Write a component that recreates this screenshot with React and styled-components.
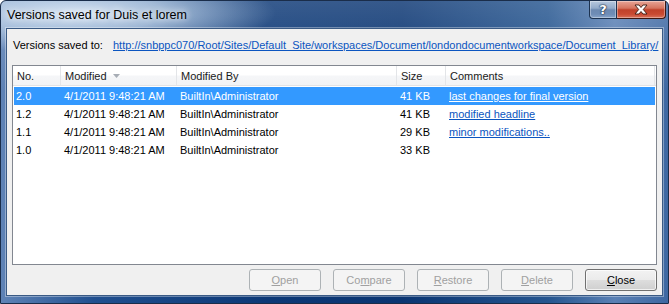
import React from 'react';
import styled, { createGlobalStyle } from 'styled-components';

const GlobalStyle = createGlobalStyle`
  html, body {
    margin: 0;
    padding: 0;
    background: #ffffff;
  }
  body {
    font-family: "Liberation Sans", Arial, sans-serif;
    font-size: 11px;
    color: #000;
  }
`;

const Window = styled.div`
  width: 669px;
  height: 304px;
  box-sizing: border-box;
  display: flex;
  flex-direction: column;
  padding: 0 5px 7px;
  border: 1px solid #1a2d4a;
  border-radius: 6px 6px 0 0;
  background:
    radial-gradient(ellipse 200px 40px at 75px 12px, rgba(218, 231, 245, 0.97) 0%, rgba(190, 210, 232, 0.78) 45%, rgba(190, 210, 232, 0) 100%),
    linear-gradient(180deg, rgba(255, 255, 255, 0.18) 0%, rgba(255, 255, 255, 0) 30%),
    linear-gradient(90deg, #5f83b6 0%, #204f8f 14%, #0c3876 40%, #0a3572 60%, #25558f 82%, #5a80b4 92%, #3e68a2 100%);
`;

const TitleBar = styled.div`
  height: 27px;
  display: flex;
  align-items: center;
  justify-content: space-between;
`;

const Title = styled.span`
  padding-left: 1px;
  font-size: 12.5px;
  color: #000;
  text-shadow: 0 0 6px rgba(255, 255, 255, 0.9), 0 0 10px rgba(255, 255, 255, 0.7);
`;

const Caption = styled.div`
  align-self: flex-start;
  display: flex;
  margin-right: -3px;
`;

const CaptionButton = styled.div`
  width: ${({ $w }) => $w}px;
  height: 18px;
  box-sizing: border-box;
  display: flex;
  align-items: center;
  justify-content: center;
  border: 1px solid ${({ $close }) => ($close ? '#3d1610' : '#1c3250')};
  border-top: none;
  border-left: ${({ $close }) => ($close ? 'none' : '1px solid #1c3250')};
  border-radius: ${({ $close }) => ($close ? '0 0 4px 0' : '0 0 0 4px')};
  box-shadow: inset 0 0 0 1px rgba(255, 255, 255, 0.35);
  background: ${({ $close }) =>
    $close
      ? 'linear-gradient(180deg, #e7a597 0%, #d5745f 42%, #c0412a 52%, #c94a32 78%, #d8735c 100%)'
      : 'linear-gradient(180deg, #b7c8de 0%, #93abca 42%, #6c89b1 52%, #6f8db6 78%, #89a4c8 100%)'};
  color: #fff;
  font-family: "DejaVu Sans", sans-serif;
  font-weight: bold;
  font-size: 13px;
  text-shadow: 0 0 1px #1a2c45, 0 0 1px #1a2c45, 0 0 2px #1a2c45;
`;

const Client = styled.div`
  flex: 1;
  display: flex;
  flex-direction: column;
  padding: 0 5px 4px;
  background: #f0f0f0;
  border: 1px solid #3a5a84;
  box-shadow: 0 0 0 1px rgba(255, 255, 255, 0.35);
`;

const PathRow = styled.div`
  margin-top: 7px;
  height: 18px;
  display: flex;
  align-items: center;
  white-space: nowrap;
`;

const PathLabel = styled.span`
  width: 100px;
  flex: none;
  padding-left: 1px;
`;

const Link = styled.a`
  color: ${({ $light }) => ($light ? '#ffffff' : '#0b55c0')};
  text-decoration: underline;
  cursor: pointer;
`;

const ListBox = styled.div`
  flex: 1;
  margin-top: 11px;
  background: #fff;
  border: 1px solid #828790;
`;

const cols = '48px 116px 220px 49px 209px';

const HeaderRow = styled.div`
  display: grid;
  grid-template-columns: ${cols};
  height: 19px;
  border-bottom: 1px solid #e2e3e5;
  background: linear-gradient(180deg, #ffffff 0%, #ffffff 45%, #f5f6f8 55%, #f2f3f5 100%);
`;

const HeaderCell = styled.div`
  display: flex;
  align-items: center;
  padding-left: 4px;
  border-right: 1px solid #e3e5e8;
  color: #1a1a1a;
  white-space: nowrap;
`;

const Rows = styled.div`
  padding: 1px 0 0 1px;
`;

const Row = styled.div`
  display: grid;
  grid-template-columns: ${cols};
  height: 18px;
  align-items: center;
  background: ${({ $selected }) => ($selected ? '#3399ff' : 'transparent')};
  color: ${({ $selected }) => ($selected ? '#ffffff' : '#000000')};
  margin-right: 1px;
`;

const Cell = styled.div`
  padding-left: 2px;
  white-space: nowrap;
`;

const ButtonRow = styled.div`
  margin-top: 4px;
  display: flex;
  justify-content: flex-end;
  gap: 12px;
`;

const Button = styled.button`
  width: 72px;
  height: 22px;
  box-sizing: border-box;
  border-radius: 3px;
  font-family: inherit;
  font-size: 11px;
  padding: 0;
  border: 1px solid ${({ disabled }) => (disabled ? '#adb2b5' : '#707070')};
  color: ${({ disabled }) => (disabled ? '#a0a0a0' : '#000000')};
  background: ${({ disabled }) =>
    disabled
      ? '#f4f4f4'
      : 'linear-gradient(180deg, #f2f2f2 0%, #ebebeb 48%, #dddddd 52%, #cfcfcf 100%)'};
  box-shadow: ${({ disabled }) => (disabled ? 'none' : 'inset 0 0 0 1px rgba(255,255,255,0.7)')};

  u {
    text-decoration: underline;
  }
`;

const SortArrow = () => (
  <svg width="7" height="4" viewBox="0 0 7 4" style={{ marginLeft: 6, marginTop: 1 }}>
    <path d="M0 0 H7 L3.5 4 Z" fill="#a7adb5" />
  </svg>
);

const CloseGlyph = () => (
  <svg width="14" height="11" viewBox="0 0 14 11">
    <path
      d="M1 1 H5 L7 3.5 L9 1 H13 L9.3 5.5 L13 10 H9 L7 7.5 L5 10 H1 L4.7 5.5 Z"
      fill="#ffffff"
      stroke="#3a1810"
      strokeWidth="0.9"
      strokeLinejoin="round"
    />
  </svg>
);

const versions = [
  { no: '2.0', size: '41 KB', comment: 'last changes for final version', selected: true },
  { no: '1.2', size: '41 KB', comment: 'modified headline' },
  { no: '1.1', size: '29 KB', comment: 'minor modifications..' },
  { no: '1.0', size: '33 KB', comment: '' },
];

const App = () => (
  <>
    <GlobalStyle />
    <Window>
      <TitleBar>
        <Title>Versions saved for Duis et lorem</Title>
        <Caption>
          <CaptionButton $w={28}>?</CaptionButton>
          <CaptionButton $w={49} $close>
            <CloseGlyph />
          </CaptionButton>
        </Caption>
      </TitleBar>
      <Client>
        <PathRow>
          <PathLabel>Versions saved to:</PathLabel>
          <Link>http://snbppc070/Root/Sites/Default_Site/workspaces/Document/londondocumentworkspace/Document_Library/</Link>
        </PathRow>
        <ListBox>
          <HeaderRow>
            <HeaderCell>No.</HeaderCell>
            <HeaderCell>
              Modified
              <SortArrow />
            </HeaderCell>
            <HeaderCell>Modified By</HeaderCell>
            <HeaderCell>Size</HeaderCell>
            <HeaderCell>Comments</HeaderCell>
          </HeaderRow>
          <Rows>
            {versions.map((v) => (
              <Row key={v.no} $selected={v.selected}>
                <Cell>{v.no}</Cell>
                <Cell>4/1/2011 9:48:21 AM</Cell>
                <Cell>BuiltIn\Administrator</Cell>
                <Cell>{v.size}</Cell>
                <Cell>{v.comment && <Link $light={v.selected}>{v.comment}</Link>}</Cell>
              </Row>
            ))}
          </Rows>
        </ListBox>
        <ButtonRow>
          <Button disabled>
            <u>O</u>pen
          </Button>
          <Button disabled>
            Co<u>m</u>pare
          </Button>
          <Button disabled>
            <u>R</u>estore
          </Button>
          <Button disabled>
            <u>D</u>elete
          </Button>
          <Button>
            <u>C</u>lose
          </Button>
        </ButtonRow>
      </Client>
    </Window>
  </>
);

export default App;
